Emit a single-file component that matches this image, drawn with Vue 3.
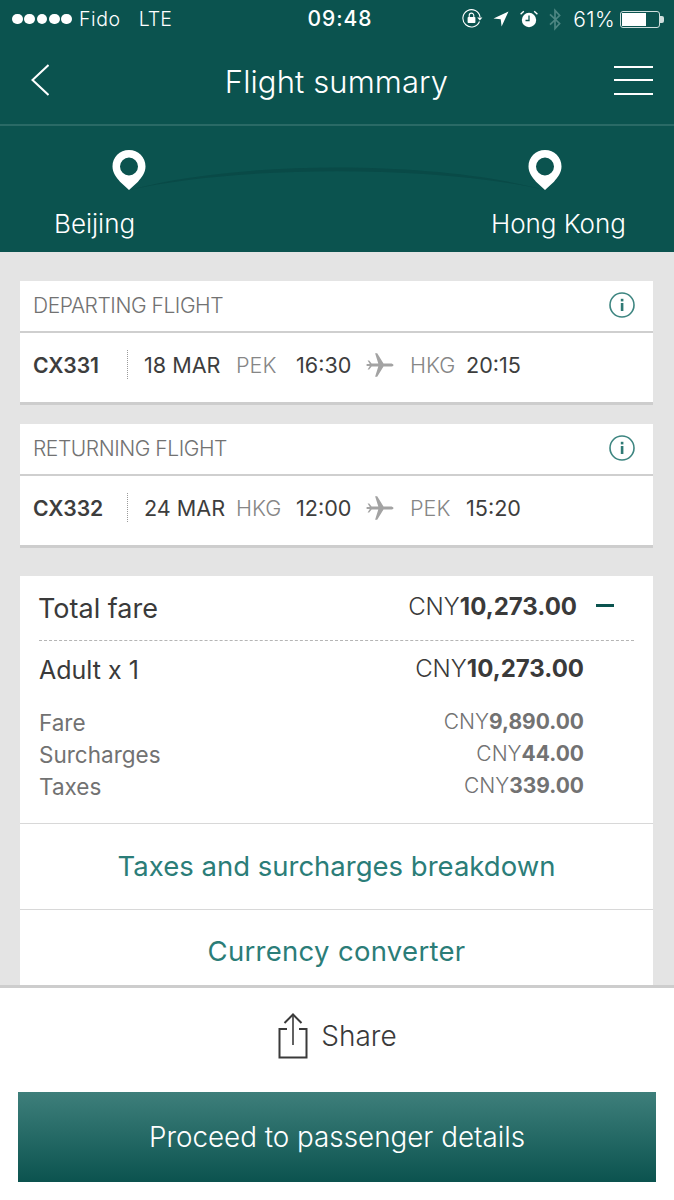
<script setup>
const flights = [
  { title: 'DEPARTING FLIGHT', code: 'CX331', date: '18 MAR', from: 'PEK', dep: '16:30', to: 'HKG', arr: '20:15' },
  { title: 'RETURNING FLIGHT', code: 'CX332', date: '24 MAR', from: 'HKG', dep: '12:00', to: 'PEK', arr: '15:20' }
]

const breakdown = [
  { label: 'Fare', value: '9,890.00' },
  { label: 'Surcharges', value: '44.00' },
  { label: 'Taxes', value: '339.00' }
]

const pinPath = 'M17 0C7.600 0 0.500 7.200 0.500 16.500c0 6.500 4 10.800 7.500 15.300L17 40l9-8.200c3.500-4.500 7.500-8.800 7.500-15.300C33.500 7.200 26.400 0 17 0zM17 7.500a9 9 0 1 0 0 18a9 9 0 1 0 0-18z'
</script>

<template>
  <div class="screen">
    <!-- status bar -->
    <div class="status">
      <div class="status-left">
        <span class="dots"><i v-for="n in 5" :key="n"></i></span>
        <span class="carrier">Fido</span>
        <span class="net">LTE</span>
      </div>
      <div class="clock">09:48</div>
      <div class="status-right">
        <svg class="st-lock" viewBox="0 0 22 20" width="22" height="20">
          <path d="M18.500 12.500A8.600 8.600 0 1 1 19 8" fill="none" stroke="#fff" stroke-width="1.100" />
          <path d="M16.200 8.400h5.200l-2.600 3z" fill="#fff" />
          <rect x="6.600" y="8" width="7.800" height="6" rx="0.800" fill="#fff" />
          <path d="M8.200 8V6.400a2.300 2.300 0 0 1 4.600 0V8" fill="none" stroke="#fff" stroke-width="1.100" />
        </svg>
        <svg class="st-arrow" viewBox="0 0 16 16" width="16" height="16">
          <path d="M15.500 0.500 0.500 7.600l7.200.7.900 7.200z" fill="#fff" />
        </svg>
        <svg class="st-alarm" viewBox="0 0 18 18" width="18" height="18">
          <circle cx="9" cy="10" r="7.200" fill="#fff" />
          <path d="M9 5.500V10.500H5.500" fill="none" stroke="#0b534f" stroke-width="1.300" />
          <path d="M0.600 4.200 3.800 1.200M17.400 4.200 14.200 1.200" stroke="#fff" stroke-width="1.400" />
        </svg>
        <svg class="st-bt" viewBox="0 0 14 22" width="14" height="23">
          <path d="M2 5.800 11.600 15 7 20V2l4.600 5L2 16.200" fill="none" stroke="#4d8682" stroke-width="1.700" />
        </svg>
        <span class="pct">61%</span>
        <div class="battery"><div class="battery-fill"></div></div>
        <div class="battery-tip"></div>
      </div>
    </div>

    <!-- nav -->
    <div class="nav">
      <svg class="back" viewBox="0 0 18 32" width="18" height="32">
        <path d="M17.500 1 1.500 16l16 15" fill="none" stroke="#fff" stroke-width="2" />
      </svg>
      <div class="nav-title">Flight summary</div>
      <div class="burger"><i></i><i></i><i></i></div>
    </div>

    <!-- route -->
    <div class="route">
      <svg class="arc" viewBox="0 0 416 40" width="416" height="40">
        <path d="M0 40C111 10 305 10 416 40C305 15 111 15 0 40z" fill="#094a47" />
      </svg>
      <div class="city city-from">
        <svg viewBox="0 0 34 40" width="34" height="40" class="pin">
          <path fill-rule="evenodd" fill="#fff" :d="pinPath" />
        </svg>
        <span>Beijing</span>
      </div>
      <div class="city city-to">
        <svg viewBox="0 0 34 40" width="34" height="40" class="pin">
          <path fill-rule="evenodd" fill="#fff" :d="pinPath" />
        </svg>
        <span>Hong Kong</span>
      </div>
    </div>

    <!-- content -->
    <div class="content">
      <div v-for="f in flights" :key="f.code" class="card flight">
        <div class="flight-head">
          <span>{{ f.title }}</span>
          <svg viewBox="0 0 26 26" width="26" height="26">
            <circle cx="13" cy="13" r="12" fill="none" stroke="#3d8580" stroke-width="1.600" />
            <rect x="11.800" y="11" width="2.600" height="8" fill="#2f7a75" />
            <rect x="11.800" y="6.800" width="2.600" height="2.600" fill="#2f7a75" />
          </svg>
        </div>
        <div class="flight-row">
          <span class="code">{{ f.code }}</span>
          <span class="date">{{ f.date }}</span>
          <span class="port">{{ f.from }}</span>
          <span class="time">{{ f.dep }}</span>
          <svg class="plane" viewBox="0 0 28 26" width="28" height="26">
            <path fill="#a3a3a3" d="M27.500 13c0-1-1.500-1.600-3-1.600h-7L11.200 1.200H9.100l3.200 10.200H5.600L3.200 8.600 1.600 8.600 3.800 12 0.600 12 0.600 14 3.800 14 1.600 17.400 3.200 17.400 5.600 14.600h6.700L9.100 24.800h2.100L17.500 14.600h7c1.500 0 3-.6 3-1.600z" />
          </svg>
          <span class="port">{{ f.to }}</span>
          <span class="time">{{ f.arr }}</span>
        </div>
      </div>

      <div class="card fare">
        <div class="fare-top">
          <div class="total">
            <span class="total-label">Total fare</span>
            <span class="amount total-amount">CNY<b>10,273.00</b></span>
            <i class="minus"></i>
          </div>
          <div class="dash"></div>
          <div class="adult">
            <span>Adult x 1</span>
            <span class="amount adult-amount">CNY<b>10,273.00</b></span>
          </div>
          <div v-for="b in breakdown" :key="b.label" class="line">
            <span>{{ b.label }}</span>
            <span class="amount line-amount">CNY<b>{{ b.value }}</b></span>
          </div>
        </div>
        <div class="link">Taxes and surcharges breakdown</div>
        <div class="link link-wide">Currency converter</div>
      </div>
    </div>

    <!-- footer -->
    <div class="footer">
      <div class="share">
        <svg viewBox="0 0 32 46" width="32" height="46">
          <path d="M10 16H2.500V44.500H29.500V16H22" fill="none" stroke="#3a3a3a" stroke-width="2" />
          <path d="M16 32V2" stroke="#3a3a3a" stroke-width="1.600" />
          <path d="M7.500 10 16 1.500 24.500 10" fill="none" stroke="#3a3a3a" stroke-width="2" />
        </svg>
        <span>Share</span>
      </div>
      <div class="proceed">Proceed to passenger details</div>
    </div>
  </div>
</template>

<style>
html, body { margin: 0; padding: 0; background: #fff; }
</style>

<style scoped>
.screen {
  width: 674px;
  height: 1200px;
  overflow: hidden;
  display: flex;
  flex-direction: column;
  font-family: Inter, "Liberation Sans", sans-serif;
  color: #3a3a3a;
  background: #fff;
}

/* Status bar */
.status {
  height: 44px;
  flex: none;
  background: #0b534f;
  color: #fff;
  position: relative;
  display: flex;
  align-items: center;
  justify-content: space-between;
  padding: 0 10px 6px 12px;
  box-sizing: border-box;
}
.status-left, .status-right { display: flex; align-items: center; }
.dots { display: flex; gap: 1.750px; margin-right: 7px; }
.dots i { width: 10.600px; height: 10.600px; border-radius: 50%; background: #fff; }
.carrier { font-size: 19.500px; font-weight: 300; margin-right: 18px; letter-spacing: 0.600px; }
.net { font-size: 19.500px; font-weight: 300; }
.clock {
  position: absolute;
  left: 6px;
  right: 0;
  top: 6px;
  text-align: center;
  font-size: 21px;
  font-weight: 500;
  letter-spacing: 1px;
}
.st-lock { margin-right: 10px; }
.st-arrow { margin-right: 11px; }
.st-alarm { margin-right: 10px; }
.st-bt { margin-right: 11px; }
.pct { font-size: 21px; font-weight: 300; margin-right: 5px; letter-spacing: 0.400px; }
.battery {
  width: 40px;
  height: 17px;
  border: 1px solid #cfdedd;
  border-radius: 3px;
  padding: 1px;
  box-sizing: border-box;
}
.battery-fill { width: 24px; height: 100%; background: #fff; }
.battery-tip { width: 4px; height: 7px; background: #cfdedd; border-radius: 0 2px 2px 0; }

/* Nav */
.nav {
  height: 82px;
  flex: none;
  background: #0b534f;
  border-bottom: 2px solid #2a6a66;
  box-sizing: border-box;
  display: flex;
  align-items: center;
  justify-content: space-between;
  padding: 0 21px 8px 31px;
}
.nav-title { font-size: 31px; font-weight: 300; color: #fff; letter-spacing: 0.100px; margin: 2px 0 0 10px; }
.burger { width: 39px; height: 29px; display: flex; flex-direction: column; justify-content: space-between; }
.burger i { height: 2px; background: #fff; }

/* Route */
.route {
  height: 126px;
  flex: none;
  background: #0b534f;
  position: relative;
  display: flex;
  justify-content: space-between;
  padding: 24px 48px 0 54px;
  box-sizing: border-box;
}
.arc { position: absolute; left: 129px; top: 24px; }
.city { display: flex; flex-direction: column; font-size: 26px; font-weight: 300; color: #fff; position: relative; }
.city-from { align-items: flex-start; }
.city-from .pin { margin: 0 0 0 58px; }
.city-to { align-items: flex-end; }
.city-to .pin { margin: 0 64px 0 0; }
.city span { margin-top: 18px; line-height: 32px; }

/* Content */
.content {
  flex: 1;
  min-height: 0;
  overflow: hidden;
  background: #e4e4e4;
  padding: 29px 21px 0 20px;
}
.card { background: #fff; }
.flight { height: 124px; box-sizing: border-box; border-bottom: 3px solid #cdcdcd; margin-bottom: 19px; }
.flight-head {
  height: 52px;
  box-sizing: border-box;
  border-bottom: 2px solid #cfcfcf;
  display: flex;
  align-items: center;
  justify-content: space-between;
  padding: 0 18px 2px 13px;
  font-size: 21px;
  font-weight: 300;
  color: #727272;
  letter-spacing: -0.450px;
}
.flight-row {
  height: 69px;
  box-sizing: border-box;
  display: grid;
  grid-template-columns: 111px 92px 60px 70px 44px 56px auto;
  align-items: center;
  padding: 0 0 6px 13px;
  font-size: 21.600px;
  color: #3d3d3d;
  white-space: nowrap;
}
/* the dotted rule beside the flight number */
.code {
  width: 95px;
  height: 30px;
  line-height: 30px;
  font-size: 21.200px;
  font-weight: 600;
  background: repeating-linear-gradient(#9a9a9a 0 1px, transparent 1px 2px) right top / 1px 100% no-repeat;
}
.port { color: #868686; font-weight: 300; }

/* Fare */
.fare { margin-top: 28px; }
.fare-top { padding: 9px 19px 0 19px; height: 247px; box-sizing: border-box; }
.total, .adult, .line { display: flex; justify-content: space-between; align-items: center; }
.total { height: 46px; justify-content: flex-start; }
.total-label { font-size: 27px; flex: 1; margin-left: -1px; }
.total-amount { font-size: 24px; margin-top: -4px; }
.minus { width: 18px; height: 3px; background: #0b534f; margin: -6px 20px 0 19px; }
.amount { font-weight: 300; white-space: nowrap; }
.amount b { font-weight: 700; }
.dash { border-top: 1px dashed #b5b5b5; margin-top: 9px; }
.adult { font-size: 25px; margin: 6px 50px 0 0; height: 46px; color: #3a3a3a; }
.adult-amount { font-size: 24px; margin-top: -3px; }
.line { font-size: 22.500px; line-height: 32px; color: #727272; margin-right: 50px; }
.line-amount { font-size: 21px; margin-top: -2px; }
.adult + .line { margin-top: 14px; }
.link {
  height: 86px;
  border-top: 1px solid #d8d8d8;
  display: flex;
  align-items: center;
  justify-content: center;
  font-size: 27.500px;
  color: #2b7d78;
  box-sizing: border-box;
  padding-bottom: 2px;
}
.link-wide { letter-spacing: 0.300px; padding-bottom: 4px; }

/* Footer */
.footer {
  flex: none;
  height: 215px;
  box-sizing: border-box;
  border-top: 3px solid #cdcdcd;
  background: #fff;
  display: flex;
  flex-direction: column;
  align-items: center;
}
.share {
  height: 104px;
  box-sizing: border-box;
  display: flex;
  align-items: center;
  justify-content: center;
  gap: 12px;
  font-size: 28px;
  font-weight: 300;
  color: #3a3a3a;
  padding: 0 0 9px 0;
}
.proceed {
  width: 638px;
  height: 90px;
  flex: none;
  display: flex;
  align-items: center;
  justify-content: center;
  font-size: 27.800px;
  font-weight: 300;
  color: #fff;
  background: linear-gradient(#3e7f7b, #0b534f);
}
</style>
